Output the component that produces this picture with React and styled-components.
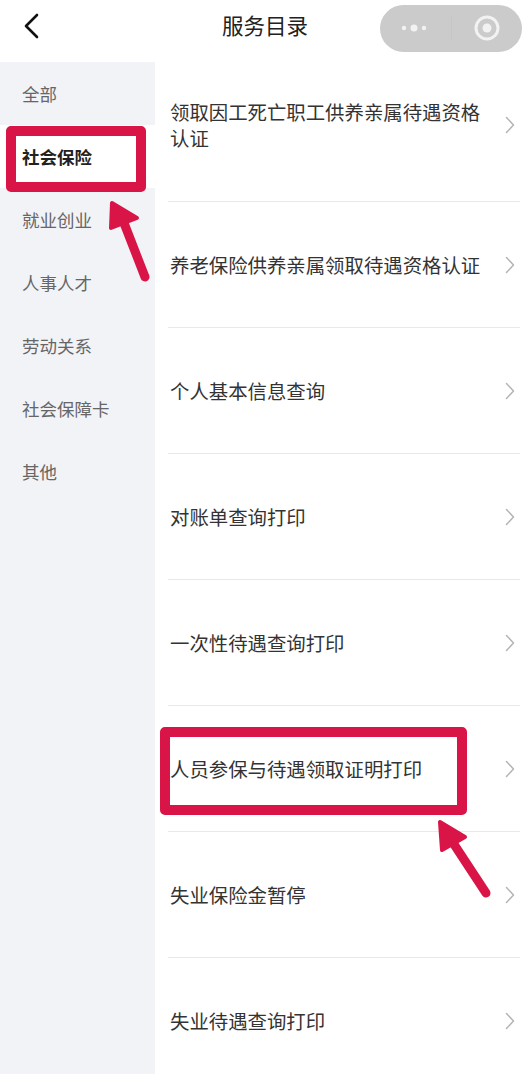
import React from 'react'
import styled, { createGlobalStyle } from 'styled-components'

const GlobalStyle = createGlobalStyle`
  body {
    margin: 0;
    background: #fff;
    font-family: "Noto Sans CJK SC", "Noto Sans", sans-serif;
  }
`

const Page = styled.div`
  position: relative;
  width: 530px;
  height: 1074px;
  overflow: hidden;
  background: #fff;
`

const Header = styled.div`
  display: flex;
  align-items: center;
  justify-content: space-between;
  height: 62px;
  padding: 0 8px 0 23px;
  box-sizing: border-box;
  position: relative;
`

const Title = styled.div`
  position: absolute;
  left: 0;
  right: 0;
  top: 9px;
  text-align: center;
  font-size: 21.5px;
  line-height: 32px;
  color: #222;
  pointer-events: none;
`

const BackButton = styled.div`
  width: 24px;
  height: 30px;
  display: flex;
  align-items: center;
  margin-top: -10px;
`

const Capsule = styled.div`
  display: flex;
  align-items: center;
  width: 142px;
  height: 47px;
  margin-top: -6px;
  border-radius: 24px;
  background: #cbcbcb;
`

const CapsuleHalf = styled.div`
  flex: 1;
  display: flex;
  align-items: center;
  justify-content: center;
  height: 100%;
`

const CapsuleDivider = styled.div`
  width: 1px;
  height: 24px;
  background: #c6c6c6;
`

const Body = styled.div`
  display: flex;
`

const Sidebar = styled.div`
  width: 155px;
  flex-shrink: 0;
  background: #f2f3f7;
  min-height: 1012px;
`

const SideItem = styled.div`
  height: 63px;
  display: flex;
  align-items: center;
  padding-left: 22px;
  font-size: 17.5px;
  color: ${(p) => (p.$active ? '#222' : '#666')};
  font-weight: ${(p) => (p.$active ? 700 : 400)};
  background: ${(p) => (p.$active ? '#fff' : 'transparent')};
`

const List = styled.div`
  flex: 1;
  background: #fff;
`

const Row = styled.div`
  display: flex;
  align-items: center;
  height: ${(p) => (p.$first ? 140 : 126)}px;
  padding: 0 15px ${(p) => (p.$first ? 14 : 0)}px 15px;
  box-sizing: border-box;
  position: relative;
  &::after {
    content: '';
    position: absolute;
    left: 13px;
    right: 10px;
    bottom: 0;
    height: 1px;
    background: #e9e9ec;
  }
`

const RowText = styled.div`
  flex: 1;
  margin-right: 18px;
  font-size: 19.4px;
  line-height: 26px;
  color: #333;
`

const Chevron = styled.svg`
  width: 10px;
  height: 18px;
  flex-shrink: 0;
`

const Highlight = styled.div`
  position: absolute;
  border: 10px solid #d91547;
  border-radius: 5px;
  box-sizing: border-box;
`

const ArrowLayer = styled.svg`
  position: absolute;
  left: 0;
  top: 0;
  pointer-events: none;
`

const categories = ['全部', '社会保险', '就业创业', '人事人才', '劳动关系', '社会保障卡', '其他']

const services = [
  '领取因工死亡职工供养亲属待遇资格认证',
  '养老保险供养亲属领取待遇资格认证',
  '个人基本信息查询',
  '对账单查询打印',
  '一次性待遇查询打印',
  '人员参保与待遇领取证明打印',
  '失业保险金暂停',
  '失业待遇查询打印',
]

const Arrow = ({ tip, left, right, tail }) => (
  <g>
    <line
      x1={tail[0]}
      y1={tail[1]}
      x2={(left[0] + right[0]) / 2}
      y2={(left[1] + right[1]) / 2}
      stroke="#d91547"
      strokeWidth="9"
      strokeLinecap="round"
    />
    <polygon
      points={`${tip.join(',')} ${left.join(',')} ${right.join(',')}`}
      fill="#d91547"
      stroke="#d91547"
      strokeWidth="4"
      strokeLinejoin="round"
    />
  </g>
)

const App = () => {
  return (
    <Page>
      <GlobalStyle />
      <Header>
        <BackButton>
          <svg width="18" height="28" viewBox="0 0 18 28">
            <polyline
              points="14,3 3,14 14,25"
              fill="none"
              stroke="#111"
              strokeWidth="2.6"
              strokeLinecap="round"
              strokeLinejoin="round"
            />
          </svg>
        </BackButton>
        <Title>服务目录</Title>
        <Capsule>
          <CapsuleHalf>
            <svg width="32" height="10" viewBox="0 0 32 10">
              <circle cx="5" cy="5" r="2.2" fill="#f2f2f2" />
              <circle cx="15" cy="5" r="3.5" fill="#f2f2f2" />
              <circle cx="25" cy="5" r="2.2" fill="#f2f2f2" />
            </svg>
          </CapsuleHalf>
          <CapsuleDivider />
          <CapsuleHalf>
            <svg width="28" height="28" viewBox="0 0 28 28">
              <circle cx="14" cy="14" r="11" fill="none" stroke="#f2f2f2" strokeWidth="3" />
              <circle cx="14" cy="14" r="4.5" fill="#f2f2f2" />
            </svg>
          </CapsuleHalf>
        </Capsule>
      </Header>
      <Body>
        <Sidebar>
          {categories.map((c) => (
            <SideItem key={c} $active={c === '社会保险'}>
              {c}
            </SideItem>
          ))}
        </Sidebar>
        <List>
          {services.map((s, i) => (
            <Row key={s} $first={i === 0}>
              <RowText>{s}</RowText>
              <Chevron viewBox="0 0 10 18">
                <polyline
                  points="1.5,1.5 8.5,9 1.5,16.5"
                  fill="none"
                  stroke="#b4b4b4"
                  strokeWidth="1.5"
                  strokeLinecap="round"
                  strokeLinejoin="round"
                />
              </Chevron>
            </Row>
          ))}
        </List>
      </Body>

      <Highlight style={{ left: 6, top: 126, width: 140, height: 66 }} />
      <Highlight style={{ left: 160, top: 727, width: 307, height: 88 }} />

      <ArrowLayer width="530" height="1074" viewBox="0 0 530 1074">
        <Arrow tip={[112, 203]} left={[111, 228]} right={[137, 218]} tail={[145, 277]} />
        <Arrow tip={[440, 822]} left={[442, 850]} right={[465, 837]} tail={[486, 893]} />
      </ArrowLayer>
    </Page>
  )
}

export default App
